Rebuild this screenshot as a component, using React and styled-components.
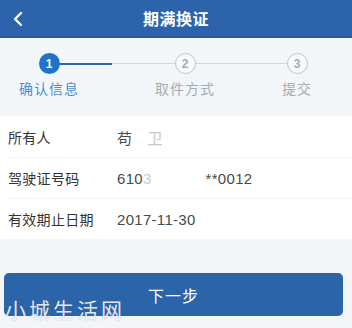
import React from 'react'
import styled, { createGlobalStyle } from 'styled-components'

const GlobalStyle = createGlobalStyle`
  html, body {
    margin: 0;
    padding: 0;
    background: #f2f6f9;
    font-family: "Noto Sans CJK SC", "Noto Sans", sans-serif;
  }
`

const steps = [
  { no: 1, label: '确认信息' },
  { no: 2, label: '取件方式' },
  { no: 3, label: '提交' },
]

function App() {
  const rows = [
    { label: '所有人', value: <>苟<Faded>　卫</Faded></> },
    { label: '驾驶证号码', value: <>610<Faded>3</Faded><Gap />**0012</> },
    { label: '有效期止日期', value: '2017-11-30' },
  ]

  return (
    <Page>
      <GlobalStyle />
      <Header>
        <BackButton>
          <svg width="12" height="16" viewBox="0 0 12 16">
            <path d="M9 2 L3 8 L9 14" fill="none" stroke="#fff" strokeWidth="2.4" strokeLinecap="round" strokeLinejoin="round" />
          </svg>
        </BackButton>
        <Title>期满换证</Title>
      </Header>

      <Steps>
        <Track>
          <TrackActive />
        </Track>
        {steps.map(step => (
          <Step key={step.no}>
            <Circle $active={step.no === 1}>{step.no}</Circle>
            <StepLabel $active={step.no === 1}>{step.label}</StepLabel>
          </Step>
        ))}
      </Steps>

      <InfoList>
        {rows.map(row => (
          <InfoRow key={row.label}>
            <InfoLabel>{row.label}</InfoLabel>
            <InfoValue>{row.value}</InfoValue>
          </InfoRow>
        ))}
      </InfoList>

      <Footer>
        <NextButton>下一步</NextButton>
        <Watermark>小城生活网</Watermark>
      </Footer>
    </Page>
  )
}

const Page = styled.div`
  width: 352px;
  height: 328px;
  overflow: hidden;
  background: #f2f6f9;
  display: flex;
  flex-direction: column;
`

const Header = styled.div`
  height: 36px;
  flex: 0 0 36px;
  background: #2c63aa;
  border-bottom: 2px solid #285a9c;
  display: flex;
  align-items: center;
  justify-content: center;
  position: relative;
`

const BackButton = styled.div`
  position: absolute;
  left: 12px;
  top: 11px;
  display: flex;
`

const Title = styled.div`
  color: #fff;
  font-size: 16px;
  font-weight: 700;
  letter-spacing: 0.5px;
`

const Steps = styled.div`
  height: 74px;
  flex: 0 0 74px;
  display: grid;
  grid-template-columns: 100px 148px 104px;
  position: relative;
  padding-top: 15px;
  box-sizing: border-box;
`

const Track = styled.div`
  position: absolute;
  left: 50px;
  right: 54px;
  top: 25px;
  height: 1px;
  background: #cfd6dd;
`

const TrackActive = styled.div`
  width: 62px;
  height: 2px;
  margin-top: -0.5px;
  background: #2a65ad;
`

const Step = styled.div`
  display: flex;
  flex-direction: column;
  align-items: center;
  position: relative;
  &:nth-child(2) { padding-right: 2px; }
  &:nth-child(3) { padding-left: 22px; }
  &:nth-child(4) { padding-right: 6px; }
`

const Circle = styled.div`
  width: 21px;
  height: 21px;
  box-sizing: border-box;
  border-radius: 50%;
  display: flex;
  align-items: center;
  justify-content: center;
  font-family: "Liberation Sans", Arial, sans-serif;
  font-size: 12px;
  font-weight: 700;
  background: ${p => (p.$active ? '#1d74c9' : '#f7f9fb')};
  color: ${p => (p.$active ? '#fff' : '#a4abb3')};
  border: ${p => (p.$active ? 'none' : '1.5px solid #bfc5cc')};
`

const StepLabel = styled.div`
  margin-top: 4px;
  font-size: 14px;
  color: ${p => (p.$active ? '#4b8fcf' : '#a6abb1')};
  letter-spacing: 1px;
`

const InfoList = styled.div`
  background: #fff;
  margin-top: 4px;
  padding-top: 1px;
`

const InfoRow = styled.div`
  height: 40px;
  display: flex;
  align-items: center;
  margin-left: 8px;
  & + & {
    border-top: 1px solid #f0f2f4;
  }
`

const InfoLabel = styled.div`
  width: 109px;
  font-size: 14px;
  color: #333;
  letter-spacing: 0.3px;
`

const InfoValue = styled.div`
  font-family: "Liberation Sans", "Noto Sans CJK SC", sans-serif;
  font-size: 15px;
  letter-spacing: 0.3px;
  color: #4a4a4a;
  display: flex;
  align-items: center;
`

const Faded = styled.span`
  color: #c8c8c8;
`

const Gap = styled.span`
  display: inline-block;
  width: 54px;
`

const Footer = styled.div`
  position: relative;
  padding: 34px 9px 0 4px;
`

const NextButton = styled.div`
  height: 43px;
  border-radius: 5px;
  background: #2c64aa;
  color: #fff;
  font-size: 16px;
  letter-spacing: 1px;
  display: flex;
  align-items: center;
  justify-content: center;
`

const Watermark = styled.div`
  position: absolute;
  left: 5px;
  top: 56px;
  font-size: 21px;
  line-height: 28px;
  color: rgba(255, 255, 255, 0.85);
  letter-spacing: 3px;
  text-shadow: 0 0 1px rgba(80, 110, 150, 0.5);
`

export default App
